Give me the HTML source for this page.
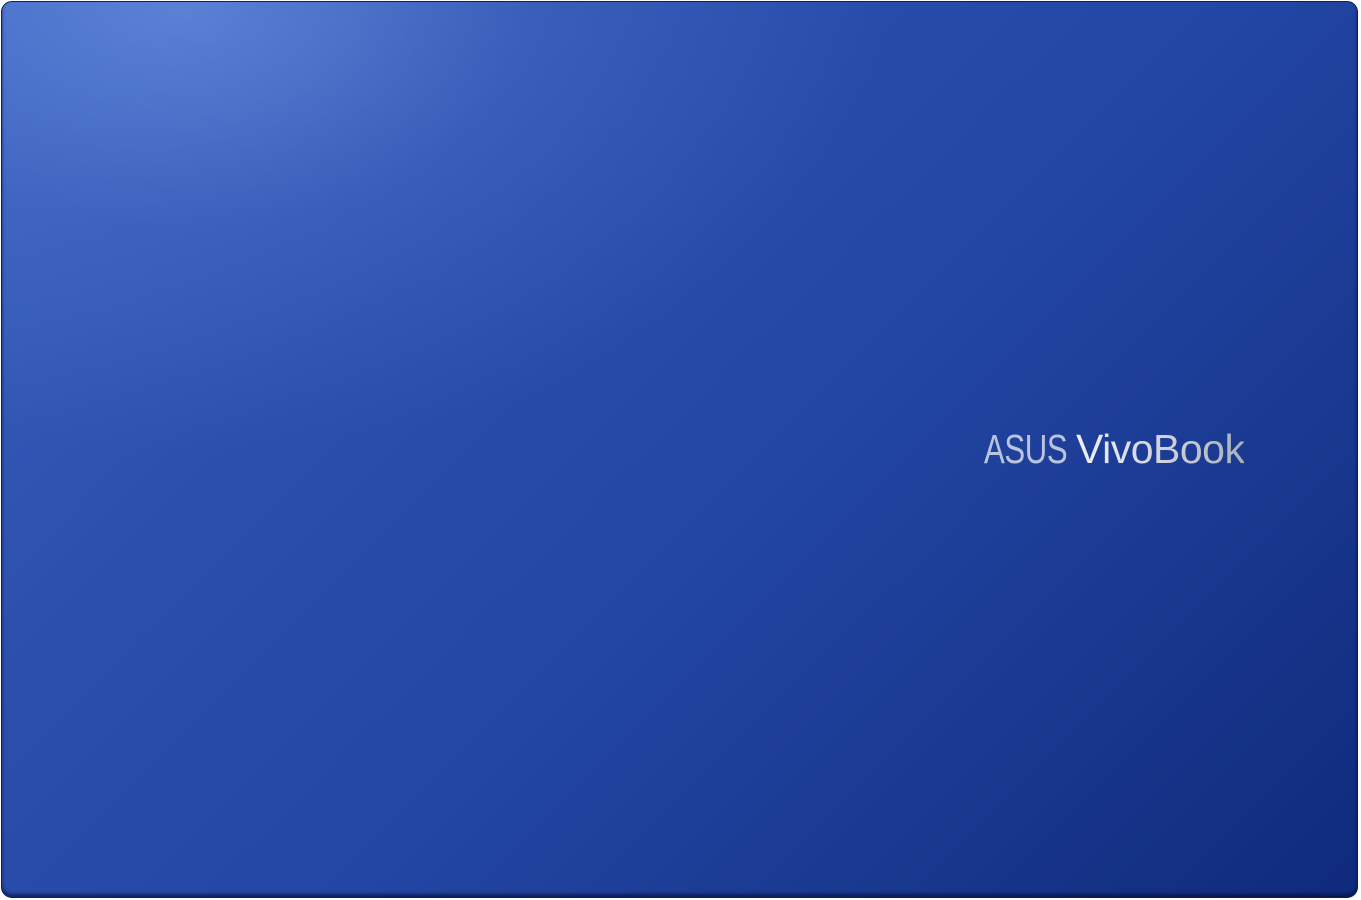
<!DOCTYPE html>
<html><head><meta charset="utf-8"><style>
html,body{margin:0;padding:0;background:#fff;}
body{width:1361px;height:900px;position:relative;overflow:hidden;}
.lid{position:absolute;left:1px;top:1px;width:1357px;height:897px;border-radius:11px;
box-sizing:border-box;border:1px solid #0a1f66;
background:
radial-gradient(ellipse 700px 450px at 180px 0px, rgba(120,160,235,0.55), rgba(90,130,215,0.25) 50%, rgba(60,100,200,0) 100%),
linear-gradient(135deg,#3b61c0 0%,#2c4fad 30%,#2346a4 55%,#19388f 78%,#0f2a7c 100%);
box-shadow:inset 0 -3px 3px rgba(0,10,50,0.6);}
.logo{position:absolute;top:426px;font-family:"Liberation Sans",sans-serif;font-size:41px;white-space:nowrap;transform-origin:left top;}
.a{left:984px;color:#b9c4de;transform:scaleX(0.76);letter-spacing:-0.5px;}
.v{left:1076px;color:#d4d9e4;background:linear-gradient(90deg,#eef1f6,#c9ced8 60%,#a9afbb);-webkit-background-clip:text;background-clip:text;-webkit-text-fill-color:transparent;letter-spacing:-0.5px;}
</style></head><body>
<div class="lid"></div>
<div class="logo a">ASUS</div>
<div class="logo v">VivoBook</div>
</body></html>
